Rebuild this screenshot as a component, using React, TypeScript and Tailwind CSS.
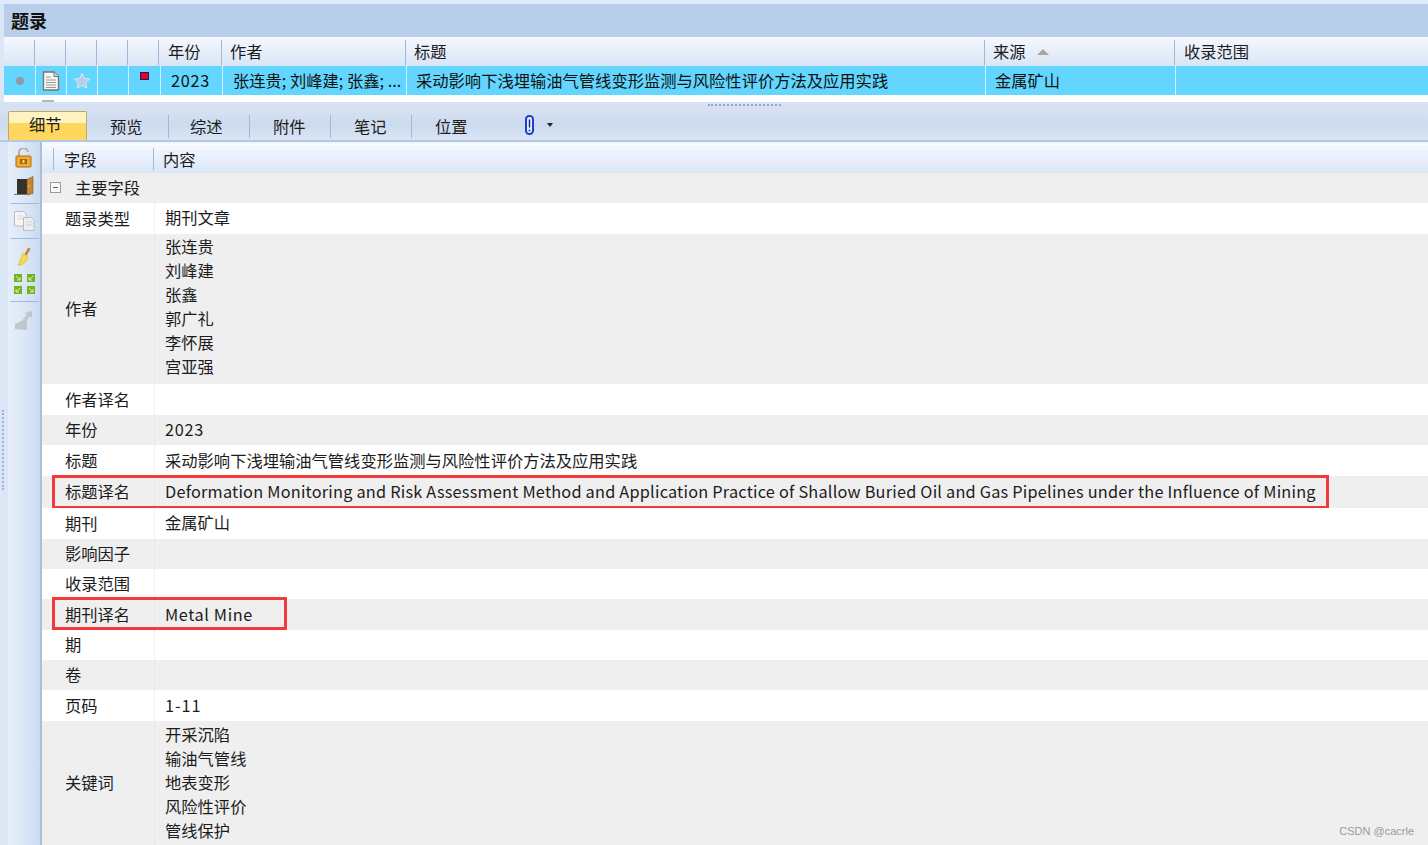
import React from 'react';

const FONT = 'font-["Noto_Sans_CJK_SC","Noto_Sans",sans-serif]';

const HEADER_COLS = [
  { w: 'w-[31px]', label: '', pl: 'pl-[10px]' },
  { w: 'w-[31px]', label: '', pl: 'pl-[10px]' },
  { w: 'w-[31px]', label: '', pl: 'pl-[10px]' },
  { w: 'w-[31px]', label: '', pl: 'pl-[10px]' },
  { w: 'w-[31px]', label: '', pl: 'pl-[10px]' },
  { w: 'w-[63px]', label: '年份', pl: 'pl-[9px]' },
  { w: 'w-[184px]', label: '作者', pl: 'pl-[8px]' },
  { w: 'w-[579px]', label: '标题', pl: 'pl-[8px]' },
  { w: 'w-[190px]', label: '来源', pl: 'pl-[8px]' },
  { w: 'flex-1', label: '收录范围', pl: 'pl-[9px]' },
];

const TABS = [
  { label: '预览', pl: 'pl-[23px]' },
  { label: '综述', pl: 'pl-[22px]' },
  { label: '附件', pl: 'pl-[24px]' },
  { label: '笔记', pl: 'pl-[24px]' },
  { label: '位置', pl: 'pl-[24px]' },
];

interface FieldRow {
  label: string;
  h: string;
  lines?: string[];
  textClass?: string;
  mark?: string;
}

const ROWS: FieldRow[] = [
  { label: '题录类型', h: 'h-[31px]', lines: ['期刊文章'], textClass: 'pb-[2px]' },
  { label: '作者', h: 'h-[150px]', lines: ['张连贵', '刘峰建', '张鑫', '郭广礼', '李怀展', '宫亚强'], textClass: 'pb-[6px]' },
  { label: '作者译名', h: 'h-[31px]' },
  { label: '年份', h: 'h-[30px]', lines: ['2023'], textClass: 'tracking-[0.7px] pb-[2px]' },
  { label: '标题', h: 'h-[31px]', lines: ['采动影响下浅埋输油气管线变形监测与风险性评价方法及应用实践'] },
  {
    label: '标题译名',
    h: 'h-[32px]',
    lines: ['Deformation Monitoring and Risk Assessment Method and Application Practice of Shallow Buried Oil and Gas Pipelines under the Influence of Mining'],
    textClass: 'tracking-[0.22px] pb-[2px]',
    mark: 'w-[1277px] h-[34px] top-[-1px]',
  },
  { label: '期刊', h: 'h-[31px]', lines: ['金属矿山'], textClass: 'pb-[2px]' },
  { label: '影响因子', h: 'h-[30px]' },
  { label: '收录范围', h: 'h-[30px]' },
  { label: '期刊译名', h: 'h-[31px]', lines: ['Metal Mine'], textClass: 'tracking-[0.6px]', mark: 'w-[235px] h-[33px] top-[-2px]' },
  { label: '期', h: 'h-[30px]' },
  { label: '卷', h: 'h-[30px]' },
  { label: '页码', h: 'h-[31px]', lines: ['1-11'], textClass: 'tracking-[0.9px]' },
  { label: '关键词', h: 'h-[124px]', lines: ['开采沉陷', '输油气管线', '地表变形', '风险性评价', '管线保护'], textClass: 'pb-[2px]' },
];

function DocIcon() {
  return (
    <svg width="18" height="20" viewBox="0 0 18 20">
      <path d="M1.5 1h10.5l4.5 4.5V19H1.5z" fill="#f6f6f4" stroke="#77736c" strokeWidth="1.3" />
      <path d="M12 1v4.5h4.5" fill="#dcdcd8" stroke="#77736c" />
      <path d="M4 6h5M4 9h10M4 11.5h10M4 14h10M4 16.5h10" stroke="#9a9a96" />
    </svg>
  );
}

function StarIcon() {
  return (
    <svg width="18" height="18" viewBox="0 0 18 18">
      <path d="M9 1.5l2.3 5 5.4.6-4 3.7 1.1 5.4L9 13.4l-4.8 2.8 1.1-5.4-4-3.7 5.4-.6z" fill="#b9cdea" stroke="#dfe9f6" />
    </svg>
  );
}

function PaperClip() {
  return (
    <svg width="9" height="20" viewBox="0 0 9 20">
      <rect x="1" y="1" width="7" height="18" rx="3.2" fill="#e8f0ff" stroke="#1a3fd8" strokeWidth="2" />
      <path d="M4.5 4.5v8" stroke="#12246e" strokeWidth="1.4" />
      <circle cx="4.5" cy="15.5" r="1" fill="#1a3fd8" />
    </svg>
  );
}

function ToolDivider() {
  return <div className="w-[29px] h-px bg-[#9dbce0] shrink-0" />;
}

function SideToolbar() {
  return (
    <div className="w-[34px] shrink-0 flex flex-col items-center bg-gradient-to-r from-[#e6effa] via-[#dbe7f6] to-[#c9dbf1] border-r-2 border-r-[#aebfd4]">
      {/* lock */}
      <svg width="18" height="20" viewBox="0 0 18 20" className="mt-[6px]">
        <path d="M4 8V5a4.5 4.5 0 0 1 9-1" fill="none" stroke="#b0b0ac" strokeWidth="2" />
        <rect x="1" y="8" width="15" height="11" rx="1" fill="#f4ac2e" stroke="#b06a10" />
        <rect x="5" y="11" width="7" height="5" fill="#a06a14" />
        <rect x="7.5" y="12" width="2" height="3" fill="#f9d98a" />
      </svg>
      {/* exit door */}
      <svg width="20" height="20" viewBox="0 0 20 20" className="mt-[8px]">
        <rect x="3" y="3" width="12" height="15" fill="#35322e" />
        <path d="M13 3.5l6-3v17l-6 1.5z" fill="#c98434" stroke="#8c5216" strokeWidth=".6" />
        <circle cx="14.8" cy="10" r=".8" fill="#f6dc8a" />
        <path d="M0 18.5h16" stroke="#777" />
      </svg>
      <div className="mt-[7px]"><ToolDivider /></div>
      {/* copy */}
      <svg width="21" height="20" viewBox="0 0 21 20" className="mt-[7px]">
        <path d="M.5.5h9l2.5 2.5v12H.5z" fill="#f6f6f6" stroke="#bdbdbd" />
        <path d="M9.500 6.500h8l2.500 2.500v10.500H9.500z" fill="#eeeeee" stroke="#bdbdbd" />
        <path d="M3 5h6M3 8h6M12 11h6M12 14h6" stroke="#d4d4d4" />
      </svg>
      <div className="mt-[7px]"><ToolDivider /></div>
      {/* broom */}
      <svg width="14" height="18" viewBox="0 0 14 18" className="mt-[9px]">
        <path d="M12.500 0L8.500 7" stroke="#c08636" strokeWidth="2.600" />
        <path d="M6 5.500l5 3c-.6 4-3 8-10 9 1.500-2 2.500-8 5-12z" fill="#f5d84e" stroke="#cdaa28" strokeWidth=".5" />
      </svg>
      {/* collapse arrows */}
      <svg width="21" height="20" viewBox="0 0 21 20" className="mt-[8px]">
        <rect x="0" y="0" width="8" height="8" fill="#74b51f" />
        <rect x="13" y="0" width="8" height="8" fill="#74b51f" />
        <rect x="0" y="12" width="8" height="8" fill="#74b51f" />
        <rect x="13" y="12" width="8" height="8" fill="#74b51f" />
        <path d="M2 2l4 4M6 3v3H3M19 2l-4 4M15 3v3h3M6 14l-4 4M2 15v3h3M15 14l4 4M19 15v3h-3" stroke="#d8f0a8" strokeWidth="1" fill="none" />
      </svg>
      <div className="mt-[7px]"><ToolDivider /></div>
      {/* disabled chart */}
      <svg width="20" height="20" viewBox="0 0 20 20" className="mt-[8px]">
        <path d="M1 19v-5l3-1 1-1 3-1 2-3 3-3-2-2 7-2v7l-2-2-3 4v10z" fill="#bfc6cc" />
      </svg>
    </div>
  );
}

export default function App() {
  return (
    <div className={`${FONT} relative w-[1428px] h-[845px] overflow-hidden flex flex-col bg-[#dbe7f7] text-[16.3px] text-[#1c1c1c] leading-none`}>
      <div className="h-[4px] shrink-0 bg-[#dfeafa]" />

      {/* title band */}
      <div className="ml-[4px] h-[33px] shrink-0 bg-[#b9cfe9] flex items-center pl-[7px] pb-[2px] font-bold text-[18px] text-[#111]">题录</div>

      {/* list header */}
      <div className="ml-[4px] h-[29px] shrink-0 flex bg-gradient-to-b from-[#f5f8fe] to-[#d9e5f6]">
        {HEADER_COLS.map((c, i) => (
          <div key={i} className={`${c.w} ${c.pl} relative flex items-center`}>
            {i > 0 && <div className="absolute left-[-1px] top-[3px] bottom-[1px] w-px bg-[#9db8d8]" />}
            {c.label}
            {c.label === '来源' && (
              <span className="ml-[11px] w-0 h-0 border-x-[6px] border-x-transparent border-b-[6px] border-b-[#a8a8a2]" />
            )}
          </div>
        ))}
      </div>

      {/* selected row */}
      <div className="ml-[4px] h-[29px] shrink-0 flex bg-[#62d6ff] text-[#111]">
        <div className="w-[32px] border-r border-r-[#d4f2ff] flex items-center justify-center">
          <div className="w-[8px] h-[8px] rounded-full bg-[#8f9ba3]" />
        </div>
        <div className="w-[31px] border-r border-r-[#d4f2ff] flex items-center justify-center"><DocIcon /></div>
        <div className="w-[31px] border-r border-r-[#d4f2ff] flex items-center justify-center"><StarIcon /></div>
        <div className="w-[31px] border-r border-r-[#d4f2ff]" />
        <div className="w-[32px] border-r border-r-[#d4f2ff] pt-[6px] flex justify-center">
          <div className="w-[9px] h-[8px] bg-[#e8001c] border border-[#1a1a70]" />
        </div>
        <div className="w-[62px] border-r border-r-[#d4f2ff] flex items-center pl-[10px] tracking-[0.7px]">2023</div>
        <div className="w-[184px] border-r border-r-[#d4f2ff] flex items-center pl-[10px] whitespace-nowrap overflow-hidden">张连贵; 刘峰建; 张鑫; ...</div>
        <div className="w-[579px] border-r border-r-[#d4f2ff] flex items-center pl-[9px] whitespace-nowrap">采动影响下浅埋输油气管线变形监测与风险性评价方法及应用实践</div>
        <div className="w-[190px] border-r border-r-[#d4f2ff] flex items-center pl-[9px]">金属矿山</div>
        <div className="flex-1" />
      </div>

      {/* next row, cut off by the splitter */}
      <div className="ml-[4px] h-[7px] shrink-0 bg-white pl-[38px] pt-[5px]">
        <div className="w-[12px] h-[2px] bg-[#b8b8b8]" />
      </div>

      {/* splitter */}
      <div className="h-[8px] shrink-0 bg-[#d6e2f3] pt-[2px] pl-[708px]">
        <div className="w-[73px] border-t-2 border-dotted border-t-[#8fa8c8]" />
      </div>

      {/* tabs */}
      <div className="h-[32px] shrink-0 flex items-end pl-[8px] bg-gradient-to-b from-[#d6e2f3] via-[#cbdaed] to-[#dae6f6] border-b-2 border-b-[#b3c8e3]">
        <div className="w-[79px] h-[29px] rounded-t-[2px] border border-[#bda96e] border-b-0 bg-gradient-to-b from-[#fff3c0] from-40% to-[#ffd75e] to-40% flex items-center pl-[20px] pb-[3px]">细节</div>
        {TABS.map((t, i) => (
          <div key={t.label} className={`w-[81px] h-[30px] relative flex items-center pt-[3px] ${t.pl}`}>
            {i > 0 && <div className="absolute left-0 top-[5px] h-[23px] w-px bg-[#9db8d8]" />}
            {t.label}
          </div>
        ))}
        <div className="h-[30px] flex items-center ml-[33px] gap-[13px]">
          <PaperClip />
          <span className="w-0 h-0 border-x-[3.5px] border-x-transparent border-t-[4px] border-t-[#222]" />
        </div>
      </div>

      {/* detail area */}
      <div className="flex-1 min-h-0 flex pl-[8px]">
        <SideToolbar />
        <div className="flex-1 min-w-0 flex flex-col bg-white">
          <div className="h-[3px] shrink-0 bg-gradient-to-b from-[#eef3fb] to-white" />
          <div className="h-[28px] shrink-0 flex bg-gradient-to-b from-[#f5f8fe] to-[#dbe6f6]">
            <div className="w-[111px] relative flex items-center pl-[22px]">
              <div className="absolute left-[11px] top-[3px] bottom-[3px] w-px bg-[#9db8d8]" />
              字段
            </div>
            <div className="flex-1 relative flex items-center pl-[10px]">
              <div className="absolute left-0 top-[3px] bottom-[3px] w-px bg-[#9db8d8]" />
              内容
            </div>
          </div>
          <div className="h-[30px] shrink-0 flex items-center bg-[#efefef] pb-[2px]">
            <div className="ml-[8px] w-[11px] h-[11px] border border-[#9a9a9a] bg-[#f8f8f8] flex items-center justify-center">
              <div className="w-[5px] h-px bg-[#3f5f9f]" />
            </div>
            <span className="ml-[14px]">主要字段</span>
          </div>
          {ROWS.map((row, i) => (
            <div key={row.label} className={`${row.h} shrink-0 flex relative ${i % 2 === 0 ? 'bg-white' : 'bg-[#efefef]'}`}>
              <div className="w-[113px] shrink-0 flex items-center pl-[23px] pb-[1px] border-r border-dotted border-r-[#e4e4e4]">{row.label}</div>
              <div className={`flex-1 flex flex-col justify-center pl-[10px] whitespace-nowrap ${row.textClass ?? ''}`}>
                {row.lines?.map(line => (
                  <div key={line} className={row.lines && row.lines.length > 1 ? 'h-[24px] flex items-center' : ''}>{line}</div>
                ))}
              </div>
              {row.mark && (
                <div className={`${row.mark} absolute left-[10px] border-[3px] border-[#f23a3c]`} />
              )}
            </div>
          ))}
        </div>
      </div>

      {/* left splitter grip */}
      <div className="absolute left-[2px] top-[410px] h-[80px] w-[2px] border-l-2 border-dotted border-l-[#9db5d4]" />

      {/* watermark */}
      <div className="absolute right-[14px] bottom-[8px] text-[11px] text-[#9a9a9a] font-['Liberation_Sans',sans-serif]">CSDN @cacrle</div>
    </div>
  );
}
